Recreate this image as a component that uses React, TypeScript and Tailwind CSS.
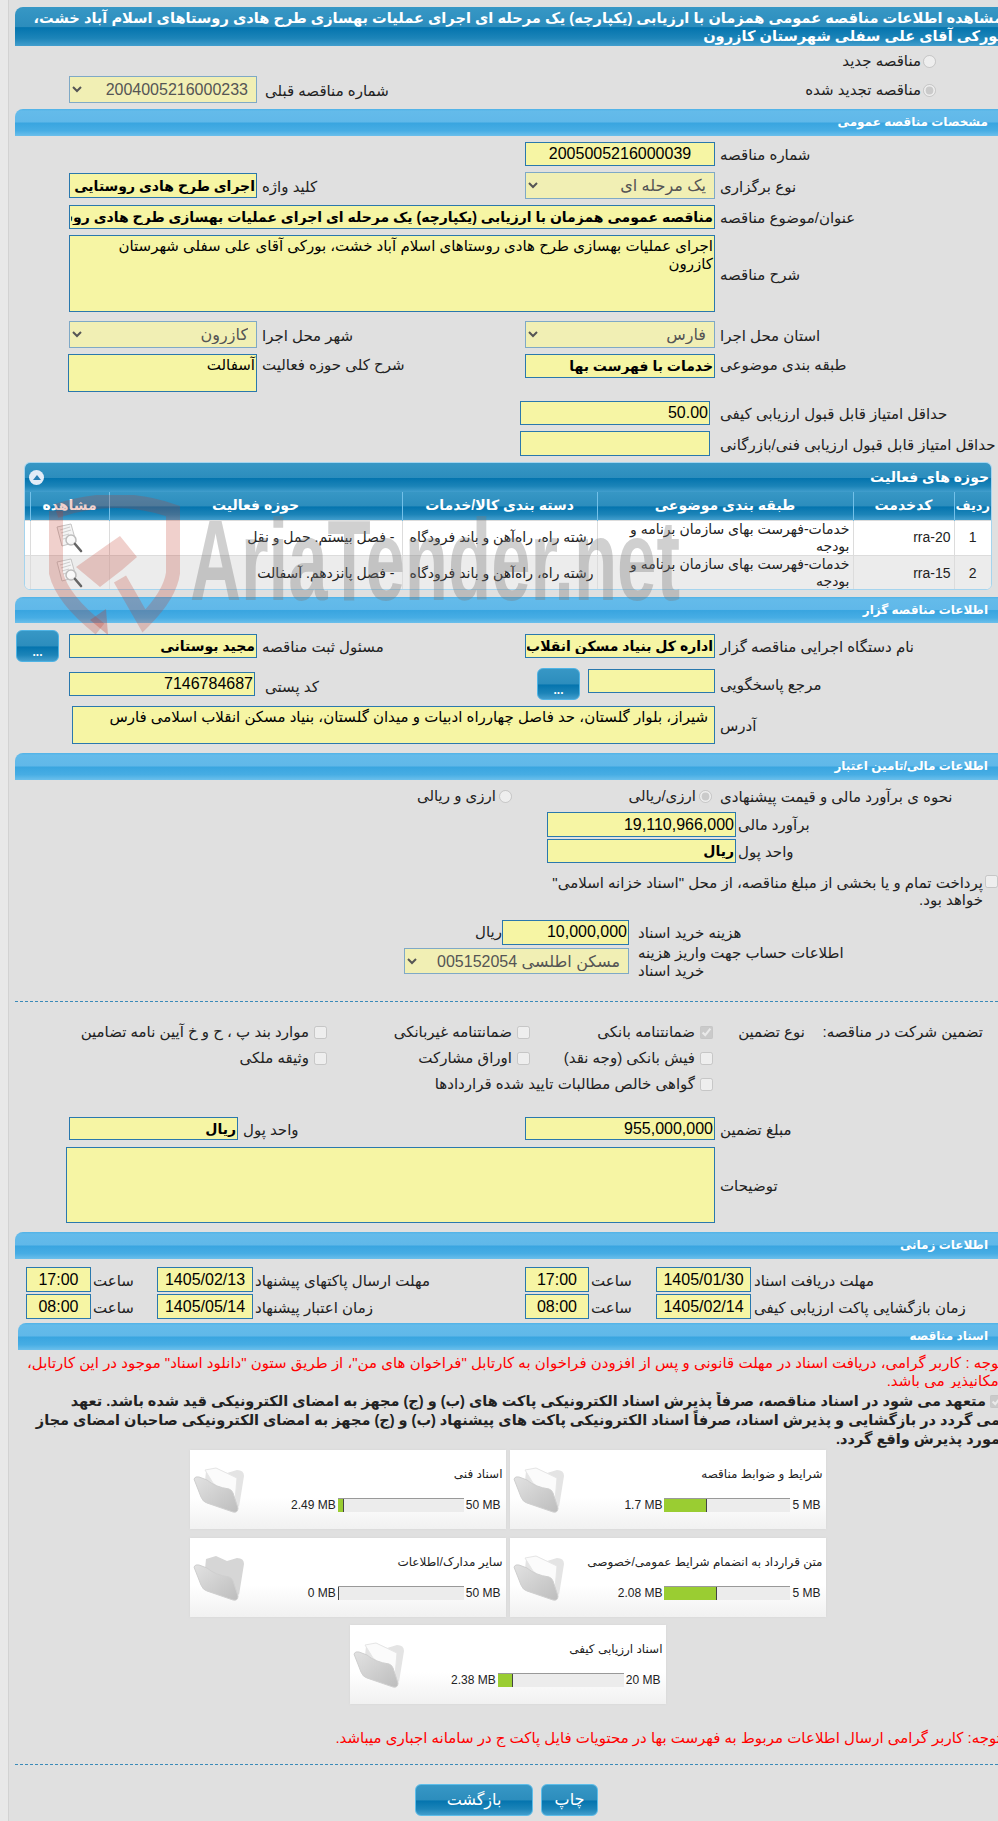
import React from 'react';

const inputBase = 'block shrink-0 bg-[#f6f5a4] border border-[#2a78ad] text-black outline-none';

const TextField: React.FC<{ value?: string; className: string; bold?: boolean; center?: boolean }> = ({ value = '', className, bold, center }) => (
  <input
    readOnly
    value={value}
    className={`${inputBase} px-px ${center ? 'text-center' : 'text-right'} ${bold ? 'font-bold text-[14px]' : 'text-[16px]'} ${className}`}
  />
);

const Area: React.FC<{ value?: string; className: string }> = ({ value = '', className }) => (
  <textarea
    readOnly
    value={value}
    className={`${inputBase} resize-none overflow-hidden pt-px text-[15px] leading-[18px] ${className}`}
  />
);

const Pick: React.FC<{ value: string; className: string }> = ({ value, className }) => (
  <select
    disabled
    className={`block shrink-0 bg-[#f1efb4] border border-[#7fa9c6] px-1 text-[16px] text-[#555] opacity-100 ${className}`}
  >
    <option>{value}</option>
  </select>
);

const Label: React.FC<{ className: string; children: React.ReactNode }> = ({ className, children }) => (
  <div className={`mt-[2px] shrink-0 text-left text-[15px] leading-[18px] text-[#222] ${className}`}>{children}</div>
);

const Section: React.FC<{ title: string; short?: boolean; className?: string }> = ({ title, short, className = '' }) => (
  <div
    className={`${short ? 'h-[26px]' : 'h-[27px]'} rounded-tl-[8px] pr-[10px] text-[12px] font-bold leading-[26px] text-white bg-[linear-gradient(to_bottom,#4fb2e7_0%,#64bbea_8%,#60b8e9_48%,#39a5e0_52%,#47ade4_80%,#6bbfeb_100%)] ${className}`}
  >
    {title}
  </div>
);

const headGrad =
  'bg-[linear-gradient(to_bottom,#3797c5_0%,#2c8dbd_50%,#0474ae_53%,#1c84b8_80%,#429ecd_100%)]';

const Radio: React.FC<{ checked?: boolean }> = ({ checked }) => (
  <input type="radio" disabled defaultChecked={checked} className="block h-[13px] w-[13px] shrink-0" />
);

const Check: React.FC<{ checked?: boolean; label: string; className: string }> = ({ checked, label, className }) => (
  <div className={`flex shrink-0 items-center gap-[5px] ${className}`}>
    <input type="checkbox" disabled defaultChecked={checked} className="block h-[13px] w-[13px] shrink-0" />
    <span className="whitespace-nowrap text-[15px] text-[#222]">{label}</span>
  </div>
);

const DocIcon = () => (
  <svg width="32" height="32" viewBox="0 0 32 32" className="mx-auto block">
    <path d="M3 5 L17 2 L22 20 L8 24 Z" fill="#f4f4f4" stroke="#c4c4c4" />
    <path d="M6 8 L16 5 M7 11 L17 8 M8 14 L15 12 M9 17 L13 16" stroke="#cfcfcf" strokeWidth="1.2" />
    <circle cx="17" cy="18" r="5" fill="#fafafa" fillOpacity="0.8" stroke="#bdbdbd" strokeWidth="1.5" />
    <path d="M21 22 L27 29" stroke="#666" strokeWidth="2.6" strokeLinecap="round" />
  </svg>
);

const FolderIcon: React.FC<{ empty?: boolean }> = ({ empty }) => (
  <svg width="52" height="48" viewBox="0 0 52 48" className="block shrink-0">
    <defs>
      <linearGradient id="folderFront" x1="0" y1="0" x2="1" y2="1">
        <stop offset="0" stopColor="#e2e2e2" />
        <stop offset="1" stopColor="#bdbdbd" />
      </linearGradient>
    </defs>
    <path d="M13 4 L23 1 L34 6 L44 3 Q51 3 51 9 L46 40 L12 14 Z" fill={empty ? '#d6d6d6' : '#e4e4e4'} />
    {!empty && <path d="M12 3 L23 1 L44 11 L42 34 L20 16 Z" fill="#fbfbfb" stroke="#e6e6e6" />}
    <path
      d="M1 12 Q2 9 6 10 L14 13 Q22 20 36 22 Q39 23 40 26 L45 41 Q45 46 40 45 L14 36 Q10 35 8 30 Z"
      fill="url(#folderFront)"
      stroke="#cfcfcf"
    />
  </svg>
);

const FileCard: React.FC<{ title: string; used: number; max: number; empty?: boolean }> = ({ title, used, max, empty }) => (
  <div className="flex h-[79px] w-[316px] shrink-0 bg-[linear-gradient(to_bottom,#ffffff_0%,#ffffff_60%,#f1f1f1_100%)] shadow-[0_0_2px_#d4d4d4]">
    <div className="flex-1 pr-[3px] pt-[14px]">
      <div className="h-[20px] whitespace-nowrap text-[12px] leading-[20px] text-[#222]">{title}</div>
      <div className="mt-[14px] flex h-[14px] items-center gap-[2px] pr-[2px] text-[12px] leading-[14px] text-[#222]">
        <span dir="ltr">{max} MB</span>
        <div dir="ltr" className="flex h-[14px] w-[126px] border-t border-[#999] bg-[#ececec]">
          <div className="h-full border-r border-[#444] bg-[#9acd32]" style={{ width: `${(used / max) * 100}%` }} />
        </div>
        <span dir="ltr">{used} MB</span>
      </div>
    </div>
    <div className="ml-[3px] pt-[17px]">
      <FolderIcon empty={empty} />
    </div>
  </div>
);

const DotsButton: React.FC<{ className?: string }> = ({ className = '' }) => (
  <div
    className={`h-[32px] w-[43px] shrink-0 rounded-[6px] border border-[#4fb3e4] pt-[14px] text-center text-[12px] font-bold leading-[14px] text-white ${headGrad} ${className}`}
  >
    ...
  </div>
);

const activity = [
  { n: '1', code: 'rra-20', area: '- فصل بیستم. حمل و نقل' },
  { n: '2', code: 'rra-15', area: '- فصل پانزدهم. آسفالت' },
];

export default function App() {
  return (
    <div className="relative flex h-[1821px] w-[998px] overflow-hidden bg-[#e0e0e0] font-['Liberation_Sans','DejaVu_Sans',sans-serif]">
      <div className="h-full w-[9px] shrink-0 border-r border-[#d2d2d2] bg-[#e8e8e8]" />
      <div dir="rtl" className="w-[989px] shrink-0 pl-[6px] pt-[7px]">
        {/* title */}
        <div className={`h-[39px] overflow-hidden rounded-tl-[8px] text-[14.6px] font-bold leading-[18px] text-white ${headGrad}`}>
          <div className="-mr-[5px] whitespace-nowrap pt-[2px]">
            مشاهده اطلاعات مناقصه عمومی همزمان با ارزیابی (یکپارچه) یک مرحله ای اجرای عملیات بهسازی طرح هادی روستاهای اسلام آباد خشت،
          </div>
          <div className="-mr-[5px] whitespace-nowrap">بورکی آقای علی سفلی شهرستان کازرون</div>
        </div>

        <div className="flex h-[30px] items-center gap-[2px] pr-[62px]">
          <Radio />
          <span className="text-[15px] text-[#222]">مناقصه جدید</span>
        </div>
        <div className="flex h-[33px] items-start justify-between pl-[54px]">
          <div className="flex items-center gap-[2px] pr-[62px] pt-[3px]">
            <Radio checked />
            <span className="text-[15px] text-[#222]">مناقصه تجدید شده</span>
          </div>
          <div className="flex items-center">
            <Label className="pl-[8px]">شماره مناقصه قبلی</Label>
            <Pick value="2004005216000233" className="h-[27px] w-[188px]" />
          </div>
        </div>

        <Section title="مشخصات مناقصه عمومی" />

        <div className="mt-[6px] flex h-[24px] items-center">
          <Label className="w-[283px] pl-[5px]">شماره مناقصه</Label>
          <TextField center value="2005005216000039" className="h-[24px] w-[190px]" />
        </div>
        <div className="mt-[6px] flex h-[27px] items-center">
          <Label className="w-[283px] pl-[5px]">نوع برگزاری</Label>
          <Pick value="یک مرحله ای" className="h-[27px] w-[190px]" />
          <Label className="w-[268px] pl-[5px]">کلید واژه</Label>
          <TextField bold value="اجرای طرح هادی روستایی" className="h-[25px] w-[188px]" />
        </div>
        <div className="mt-[6px] flex h-[24px] items-center">
          <Label className="w-[283px] pl-[5px]">عنوان/موضوع مناقصه</Label>
          <TextField
            bold
            value="مناقصه عمومی همزمان با ارزیابی (یکپارچه) یک مرحله ای اجرای عملیات بهسازی طرح هادی روستاهای اسلام آباد خشت"
            className="h-[24px] w-[646px]"
          />
        </div>
        <div className="mt-[6px] flex h-[77px] items-center">
          <Label className="w-[283px] pl-[5px]">شرح مناقصه</Label>
          <Area
            value="اجرای عملیات بهسازی طرح هادی روستاهای اسلام آباد خشت، بورکی آقای علی سفلی شهرستان کازرون"
            className="h-[77px] w-[646px] px-px"
          />
        </div>
        <div className="mt-[9px] flex h-[27px] items-center">
          <Label className="w-[283px] pl-[5px]">استان محل اجرا</Label>
          <Pick value="فارس" className="h-[27px] w-[190px]" />
          <Label className="w-[268px] pl-[5px]">شهر محل اجرا</Label>
          <Pick value="کازرون" className="h-[27px] w-[188px]" />
        </div>
        <div className="mt-[6px] flex h-[38px] items-start">
          <Label className="w-[283px] pl-[5px]">طبقه بندی موضوعی</Label>
          <TextField bold value="خدمات با فهرست بها" className="h-[24px] w-[190px]" />
          <Label className="w-[268px] pl-[5px]">شرح کلی حوزه فعالیت</Label>
          <Area value="آسفالت" className="h-[38px] w-[189px] px-px" />
        </div>
        <div className="mt-[9px] flex h-[24px] items-center">
          <Label className="w-[288px] pl-[10px]">حداقل امتیاز قابل قبول ارزیابی کیفی</Label>
          <TextField value="50.00" className="h-[24px] w-[190px]" />
        </div>
        <div className="mt-[6px] flex h-[25px] items-center">
          <Label className="w-[288px] pl-[10px]">حداقل امتیاز قابل قبول ارزیابی فنی/بازرگانی</Label>
          <TextField className="h-[25px] w-[190px]" />
        </div>

        {/* activity table */}
        <div className="mb-[7px] ml-[9px] mr-[6px] mt-[6px] h-[128px] w-[968px] overflow-hidden rounded-b-[6px] rounded-t-[6px] border border-[#a5d4ee] bg-white">
          <div className={`flex h-[29px] items-center justify-between pl-[4px] pr-[2px] text-[14px] font-bold text-white ${headGrad}`}>
            <span>حوزه های فعالیت</span>
            <span className="flex h-[15px] w-[15px] items-center justify-center rounded-full bg-[#e3ecf7]">
              <span className="h-0 w-0 border-x-[4px] border-b-[5px] border-x-transparent border-b-[#2a7fb5]" />
            </span>
          </div>
          <table className="w-full table-fixed border-collapse text-[14px] text-[#222]">
            <thead>
              <tr className={`h-[28px] text-center text-[14px] font-bold text-white ${headGrad}`}>
                <th className="w-[37px] whitespace-nowrap border-l border-[#73c0e8] text-[13px] font-bold">ردیف</th>
                <th className="w-[101px] border-l border-[#73c0e8] font-bold">کدخدمت</th>
                <th className="w-[256px] border-l border-[#73c0e8] font-bold">طبقه بندی موضوعی</th>
                <th className="w-[195px] border-l border-[#73c0e8] font-bold">دسته بندی کالا/خدمات</th>
                <th className="w-[293px] border-l border-[#73c0e8] font-bold">حوزه فعالیت</th>
                <th className="w-[79px] border-l border-[#73c0e8] font-bold">مشاهده</th>
                <th />
              </tr>
            </thead>
            <tbody>
              {activity.map((row, i) => (
                <tr key={row.n} className={i === 0 ? 'h-[34px] bg-white' : 'h-[36px] bg-[#ececec]'}>
                  <td className="border-l border-t border-[#dcdcdc] text-center">{row.n}</td>
                  <td className="border-l border-t border-[#dcdcdc] pr-[3px] text-right">{row.code}</td>
                  <td className="whitespace-nowrap border-l border-t border-[#dcdcdc] pr-[3px] leading-[17px]">
                    خدمات-فهرست بهای سازمان برنامه و
                    <br />
                    بودجه
                  </td>
                  <td className="whitespace-nowrap border-l border-t border-[#dcdcdc] pr-[3px]">رشته راه، راه‌آهن و باند فرودگاه</td>
                  <td className="border-l border-t border-[#dcdcdc] pr-[7px]">{row.area}</td>
                  <td className="border-l border-t border-[#dcdcdc]">
                    <DocIcon />
                  </td>
                  <td className="border-t border-[#dcdcdc]" />
                </tr>
              ))}
            </tbody>
          </table>
        </div>

        <Section title="اطلاعات مناقصه گزار" short />

        <div className="mt-[7px] flex h-[32px] items-center">
          <Label className="w-[283px] pl-[5px]">نام دستگاه اجرایی مناقصه گزار</Label>
          <TextField bold value="اداره کل بنیاد مسکن انقلاب اسلامی فارس" className="h-[24px] w-[190px]" />
          <Label className="w-[268px] pl-[5px]">مسئول ثبت مناقصه</Label>
          <TextField bold value="مجید بوستانی" className="h-[24px] w-[188px]" />
          <DotsButton className="mr-[10px]" />
        </div>
        <div className="mt-[6px] flex h-[32px] items-start">
          <Label className="w-[283px] pl-[5px] pt-[6px]">مرجع پاسخگویی</Label>
          <TextField className="mt-[1px] h-[24px] w-[127px]" />
          <DotsButton className="mr-[8px]" />
          <Label className="w-[282px] pl-[10px] pt-[8px]">کد پستی</Label>
          <TextField value="7146784687" className="mt-[4px] h-[24px] w-[186px]" />
        </div>
        <div className="mt-[6px] flex h-[38px] items-center">
          <Label className="w-[283px] pl-[5px]">آدرس</Label>
          <Area
            value="شیراز، بلوار گلستان، حد فاصل چهارراه ادبیات و میدان گلستان، بنیاد مسکن انقلاب اسلامی فارس"
            className="h-[38px] w-[643px] px-[6px]"
          />
        </div>

        <Section title="اطلاعات مالی/تامین اعتبار" className="mt-[9px]" />

        <div className="flex h-[32px] items-center">
          <Label className="w-[278px]">نحوه ی برآورد مالی و قیمت پیشنهادی</Label>
          <div className="mr-[8px] flex w-[200px] items-center gap-[3px]">
            <Radio checked />
            <span className="text-[15px] text-[#222]">ارزی/ریالی</span>
          </div>
          <div className="flex items-center gap-[3px]">
            <Radio />
            <span className="text-[15px] text-[#222]">ارزی و ریالی</span>
          </div>
        </div>
        <div className="flex h-[27px] items-start">
          <Label className="w-[262px] pl-[2px] pt-[2px]">برآورد مالی</Label>
          <TextField value="19,110,966,000" className="h-[25px] w-[189px]" />
        </div>
        <div className="flex h-[33px] items-start">
          <Label className="w-[262px] pl-[2px] pt-[2px]">واحد پول</Label>
          <TextField bold value="ریال" className="h-[24px] w-[189px]" />
        </div>
        <div className="flex h-[44px] items-start gap-[2px]">
          <input type="checkbox" disabled className="mt-[3px] block h-[13px] w-[13px] shrink-0" />
          <div className="pt-[2px] text-[15px] leading-[17px] text-[#222]">
            پرداخت تمام و یا بخشی از مبلغ مناقصه، از محل "اسناد خزانه اسلامی"
            <br />
            خواهد بود.
          </div>
        </div>
        <div className="flex h-[32px] items-center">
          <Label className="w-[369px] pl-[9px]">هزینه خرید اسناد</Label>
          <TextField value="10,000,000" className="h-[25px] w-[127px]" />
          <span className="text-[15px] text-[#222]">ریال</span>
        </div>
        <div className="flex h-[26px] items-center">
          <Label className="w-[369px] pl-[9px]">
            اطلاعات حساب جهت واریز هزینه
            <br />
            خرید اسناد
          </Label>
          <Pick value="مسکن اطلسی 005152054" className="h-[26px] w-[225px]" />
        </div>

        <div className="mt-[27px] border-t border-dashed border-[#3a8ab8]" />

        <div className="mt-[18px] flex h-[25px] items-center">
          <div className="flex w-[285px] shrink-0 items-center text-[15px] text-[#222]">
            <span className="mr-[15px] w-[178px] shrink-0">تضمین شرکت در مناقصه:</span>
            <span>نوع تضمین</span>
          </div>
          <Check checked label="ضمانتنامه بانکی" className="w-[183px]" />
          <Check label="ضمانتنامه غیربانکی" className="w-[203px]" />
          <Check label="موارد بند پ ، ح و خ آیین نامه تضامین" className="" />
        </div>
        <div className="flex h-[26px] items-center pr-[285px]">
          <Check label="فیش بانکی (وجه نقد)" className="w-[183px]" />
          <Check label="اوراق مشارکت" className="w-[203px]" />
          <Check label="وثیقه ملکی" className="" />
        </div>
        <div className="flex h-[26px] items-center pr-[285px]">
          <Check label="گواهی خالص مطالبات تایید شده قراردادها" className="" />
        </div>

        <div className="mt-[20px] flex h-[23px] items-center">
          <Label className="w-[283px] pl-[5px]">مبلغ تضمین</Label>
          <TextField value="955,000,000" className="h-[23px] w-[190px]" />
          <Label className="w-[287px] pl-[5px]">واحد پول</Label>
          <TextField bold value="ریال" className="h-[23px] w-[169px]" />
        </div>
        <div className="mt-[7px] flex h-[76px] items-center">
          <Label className="w-[283px] pl-[5px]">توضیحات</Label>
          <Area className="h-[76px] w-[649px] px-px" />
        </div>

        <Section title="اطلاعات زمانی" className="mt-[9px]" />

        {[
          ['مهلت دریافت اسناد', '1405/01/30', '17:00', 'مهلت ارسال پاکتهای پیشنهاد', '1405/02/13', '17:00'],
          ['زمان بازگشایی پاکت ارزیابی کیفی', '1405/02/14', '08:00', 'زمان اعتبار پیشنهاد', '1405/05/14', '08:00'],
        ].map((r, i) => (
          <div key={r[0]} className={`flex h-[25px] items-center ${i === 0 ? 'mt-[8px]' : 'mt-[2px]'}`}>
            <Label className="w-[247px] whitespace-nowrap pl-[3px]">{r[0]}</Label>
            <TextField center value={r[1]} className="h-[25px] w-[95px]" />
            <Label className="w-[67px] pl-[2px]">ساعت</Label>
            <TextField center value={r[2]} className="h-[25px] w-[64px]" />
            <Label className="w-[272px] pl-[2px]">{r[3]}</Label>
            <TextField center value={r[4]} className="h-[25px] w-[96px]" />
            <Label className="w-[66px] pl-[2px]">ساعت</Label>
            <TextField center value={r[5]} className="h-[25px] w-[65px]" />
          </div>
        ))}

        <Section title="اسناد مناقصه" className="ml-[3px] mt-[4px]" />

        <div className="h-[38px] overflow-hidden pt-[4px] text-[15px] leading-[18px] text-[#f00]">
          <div className="-mr-[5px] whitespace-nowrap">
            توجه : کاربر گرامی، دریافت اسناد در مهلت قانونی و پس از افزودن فراخوان به کارتابل "فراخوان های من"، از طریق ستون "دانلود اسناد" موجود در این کارتابل،
          </div>
          <div className="-mr-[5px] whitespace-nowrap">امکانپذیر می باشد.</div>
        </div>
        <div className="mt-[4px] h-[58px] overflow-hidden text-[14.5px] font-bold leading-[19px] text-[#222]">
          <div className="flex items-center gap-[4px] whitespace-nowrap">
            <input type="checkbox" disabled defaultChecked className="mr-[-5px] block h-[13px] w-[13px] shrink-0" />
            متعهد می شود در اسناد مناقصه، صرفاً پذیرش اسناد الکترونیکی پاکت های (ب) و (ج) مجهز به امضای الکترونیکی قید شده باشد. تعهد
          </div>
          <div className="-mr-[2px] whitespace-nowrap">
            می گردد در بازگشایی و پذیرش اسناد، صرفاً اسناد الکترونیکی پاکت های پیشنهاد (ب) و (ج) مجهز به امضای الکترونیکی صاحبان امضای مجاز
          </div>
          <div className="-mr-[2px] whitespace-nowrap">مورد پذیرش واقع گردد.</div>
        </div>

        <div className="flex justify-center gap-[4px] pl-[2px]">
          <FileCard title="شرایط و ضوابط مناقصه" used={1.7} max={5} />
          <FileCard title="اسناد فنی" used={2.49} max={50} />
        </div>
        <div className="mt-[9px] flex justify-center gap-[4px] pl-[2px]">
          <FileCard title="متن قرارداد به انضمام شرایط عمومی/خصوصی" used={2.08} max={5} />
          <FileCard title="سایر مدارک/اطلاعات" used={0} max={50} empty />
        </div>
        <div className="mt-[8px] flex justify-center pl-[2px]">
          <FileCard title="اسناد ارزیابی کیفی" used={2.38} max={20} />
        </div>

        <div className="mt-[25px] h-[18px] overflow-hidden whitespace-nowrap text-[15px] leading-[18px] text-[#f00]">
          <span className="-mr-[3px] inline-block">
            توجه: کاربر گرامی ارسال اطلاعات مربوط به فهرست بها در محتویات فایل پاکت ج در سامانه اجباری میباشد.
          </span>
        </div>

        <div className="mt-[17px] border-t border-dashed border-[#3a8ab8]" />

        <div className="mt-[19px] flex justify-center gap-[8px]">
          <div className={`h-[32px] w-[57px] rounded-[6px] border border-[#5dbde9] text-center text-[16px] leading-[30px] text-white ${headGrad}`}>چاپ</div>
          <div className={`h-[32px] w-[118px] rounded-[6px] border border-[#5dbde9] text-center text-[16px] leading-[30px] text-white ${headGrad}`}>بازگشت</div>
        </div>
      </div>

      {/* AriaTender watermark */}
      <svg width="150" height="145" viewBox="0 0 150 145" className="pointer-events-none absolute left-[40px] top-[495px]">
        <path
          d="M16 16 Q76 -4 133 16 L133 78 Q130 100 104 126 L80 84"
          fill="none"
          stroke="#c0392b"
          strokeOpacity="0.24"
          strokeWidth="14"
        />
        <path d="M16 16 L16 78 Q22 104 60 134" fill="none" stroke="#c0392b" strokeOpacity="0.24" strokeWidth="14" />
        <path d="M67 50 L80 41 L97 62 L82 75 Z M67 50 L36 72 L60 92 L82 75 Z" fill="#c0392b" fillOpacity="0.24" />
        <path d="M50 125 L66 114 L68 140 Z" fill="#c0392b" fillOpacity="0.3" />
      </svg>
      <div
        dir="ltr"
        className="pointer-events-none absolute left-[190px] top-[495px] origin-left scale-x-[0.615] whitespace-nowrap text-[115px] font-bold leading-[130px] text-[#787878]/35"
      >
        AriaTender.net
      </div>
    </div>
  );
}
